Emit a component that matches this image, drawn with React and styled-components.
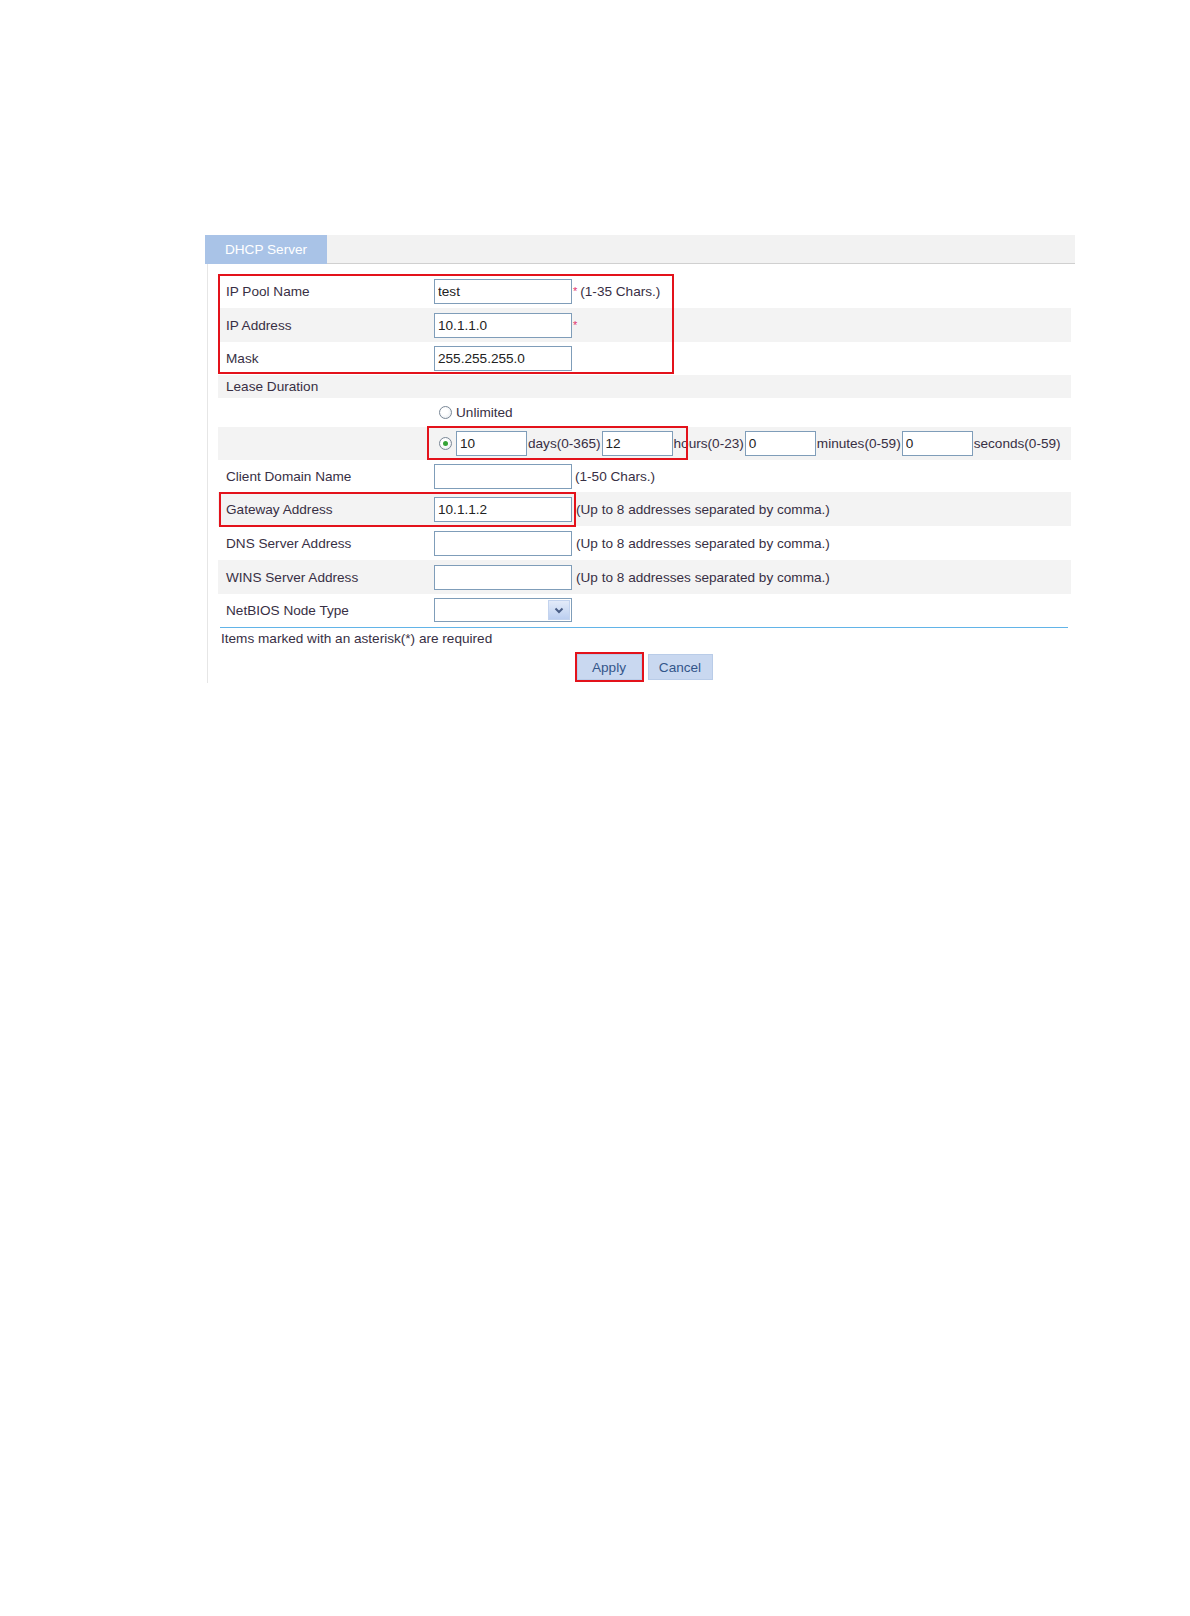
import React from 'react'
import styled, { createGlobalStyle } from 'styled-components'

const GlobalStyle = createGlobalStyle`
  html, body {
    margin: 0;
    padding: 0;
    background: #fff;
  }
  body {
    font-family: "Liberation Sans", Arial, sans-serif;
    font-size: 13.6px;
    color: #382f44;
  }
`

const Page = styled.div`
  width: 1190px;
  min-height: 1616px;
  padding: 235px 0 0 205px;
  box-sizing: border-box;
`

const Panel = styled.div`
  width: 870px;
`

const TabBar = styled.div`
  display: flex;
  height: 28px;
  background: #f2f2f2;
  border-bottom: 1px solid #d0d0d0;
`

const Tab = styled.div`
  width: 122px;
  height: 29px;
  margin-bottom: -1px;
  background: #a9c3e7;
  color: #fff;
  display: flex;
  align-items: center;
  justify-content: center;
  font-size: 13.6px;
`

const Body = styled.div`
  position: relative;
  margin-left: 2px;
  border-left: 1px solid #e6e6e6;
  padding: 10px 4px 3px 10px;
`

const Row = styled.div`
  display: flex;
  align-items: center;
  height: ${(p) => p.$h || 33}px;
  background: ${(p) => (p.$shade ? '#f3f3f3' : 'transparent')};
`

const Label = styled.div`
  width: 216px;
  flex-shrink: 0;
  box-sizing: border-box;
  padding-left: 8px;
  white-space: nowrap;
`

const Value = styled.div`
  display: flex;
  align-items: center;
  gap: ${(p) => p.$gap || 0}px;
  white-space: nowrap;
`

const TextInput = styled.input`
  width: ${(p) => p.$w || 138}px;
  height: 25px;
  box-sizing: border-box;
  border: 1px solid #7f9db9;
  padding: 0 3px;
  margin: 0;
  font-family: "Liberation Sans", Arial, sans-serif;
  font-size: 13.6px;
  color: #222;
  background: #fff;
  outline: none;
`

const Required = styled.span`
  color: #e2336c;
  font-size: 11px;
  margin-left: 1px;
`

const Hint = styled.span`
  margin-left: ${(p) => p.$ml ?? 3}px;
`

const Radio = styled.span`
  width: 13px;
  height: 13px;
  box-sizing: border-box;
  border-radius: 50%;
  border: 1px solid #7a8796;
  background: radial-gradient(circle at 40% 40%, #fff 35%, #dfe4ea);
  margin: 0 ${(p) => p.$mr ?? 4}px 0 5px;
  display: inline-flex;
  align-items: center;
  justify-content: center;
  flex-shrink: 0;

  &::after {
    content: '';
    width: 5px;
    height: 5px;
    border-radius: 50%;
    background: ${(p) => (p.$checked ? '#35a336' : 'transparent')};
  }
`

const Select = styled.div`
  width: 138px;
  height: 24px;
  box-sizing: border-box;
  border: 1px solid #7f9db9;
  background: #fff;
  display: flex;
  justify-content: flex-end;
  padding: 1px;
`

const SelectButton = styled.span`
  width: 22px;
  display: flex;
  align-items: center;
  justify-content: center;
  background: linear-gradient(#e3ebf9, #bccff0);
  border: 1px solid #c3d3ee;
  box-sizing: border-box;
`

const Divider = styled.div`
  height: 1px;
  background: #62b4e8;
  margin: 1px 3px 0 2px;
`

const Note = styled.div`
  margin: 3px 0 0 3px;
  line-height: 15px;
`

const Buttons = styled.div`
  display: flex;
  justify-content: center;
  gap: 6px;
  margin-top: 8px;
`

const Button = styled.button`
  width: ${(p) => p.$w}px;
  height: 26px;
  margin: 0;
  padding: 0;
  border: 1px solid #b9cce8;
  background: #c9d8f0;
  color: #34568a;
  font-family: "Liberation Sans", Arial, sans-serif;
  font-size: 13.6px;
  outline: ${(p) => (p.$marked ? '2px solid #e3121b' : 'none')};
  outline-offset: 0;
`

const Mark = styled.div`
  position: absolute;
  left: ${(p) => p.$x}px;
  top: ${(p) => p.$y}px;
  width: ${(p) => p.$w}px;
  height: ${(p) => p.$h}px;
  box-sizing: border-box;
  border: 2px solid #e3121b;
  pointer-events: none;
`

const Chevron = () => (
  <svg width="10" height="7" viewBox="0 0 10 7">
    <polyline points="1.5,1.5 5,5 8.5,1.5" fill="none" stroke="#4a5e86" strokeWidth="2" />
  </svg>
)

const HINT_ADDR = '(Up to 8 addresses separated by comma.)'

export default function App() {
  return (
    <Page>
      <GlobalStyle />
      <Panel>
        <TabBar>
          <Tab>DHCP Server</Tab>
        </TabBar>
        <Body>
          <Row $h={34}>
            <Label>IP Pool Name</Label>
            <Value>
              <TextInput defaultValue="test" />
              <Required>*</Required>
              <Hint>(1-35 Chars.)</Hint>
            </Value>
          </Row>
          <Row $h={34} $shade>
            <Label>IP Address</Label>
            <Value>
              <TextInput defaultValue="10.1.1.0" />
              <Required>*</Required>
            </Value>
          </Row>
          <Row>
            <Label>Mask</Label>
            <Value>
              <TextInput defaultValue="255.255.255.0" />
            </Value>
          </Row>
          <Row $h={23} $shade>
            <Label>Lease Duration</Label>
          </Row>
          <Row $h={29}>
            <Label />
            <Value>
              <Radio />
              Unlimited
            </Value>
          </Row>
          <Row $shade>
            <Label />
            <Value $gap={1}>
              <Radio $checked $mr={3} />
              <TextInput $w={71} defaultValue="10" />
              <span>days(0-365)</span>
              <TextInput $w={71} defaultValue="12" />
              <span>hours(0-23)</span>
              <TextInput $w={71} defaultValue="0" />
              <span>minutes(0-59)</span>
              <TextInput $w={71} defaultValue="0" />
              <span>seconds(0-59)</span>
            </Value>
          </Row>
          <Row $h={32}>
            <Label>Client Domain Name</Label>
            <Value>
              <TextInput />
              <Hint>(1-50 Chars.)</Hint>
            </Value>
          </Row>
          <Row $h={34} $shade>
            <Label>Gateway Address</Label>
            <Value>
              <TextInput defaultValue="10.1.1.2" />
              <Hint $ml={4}>{HINT_ADDR}</Hint>
            </Value>
          </Row>
          <Row $h={34}>
            <Label>DNS Server Address</Label>
            <Value>
              <TextInput />
              <Hint $ml={4}>{HINT_ADDR}</Hint>
            </Value>
          </Row>
          <Row $h={34} $shade>
            <Label>WINS Server Address</Label>
            <Value>
              <TextInput />
              <Hint $ml={4}>{HINT_ADDR}</Hint>
            </Value>
          </Row>
          <Row $h={32}>
            <Label>NetBIOS Node Type</Label>
            <Value>
              <Select>
                <SelectButton>
                  <Chevron />
                </SelectButton>
              </Select>
            </Value>
          </Row>
          <Divider />
          <Note>Items marked with an asterisk(*) are required</Note>
          <Buttons>
            <Button $w={65} $marked>Apply</Button>
            <Button $w={65}>Cancel</Button>
          </Buttons>

          <Mark $x={10} $y={10} $w={456} $h={100} />
          <Mark $x={219} $y={162} $w={261} $h={34} />
          <Mark $x={11} $y={228} $w={357} $h={35} />
        </Body>
      </Panel>
    </Page>
  )
}
